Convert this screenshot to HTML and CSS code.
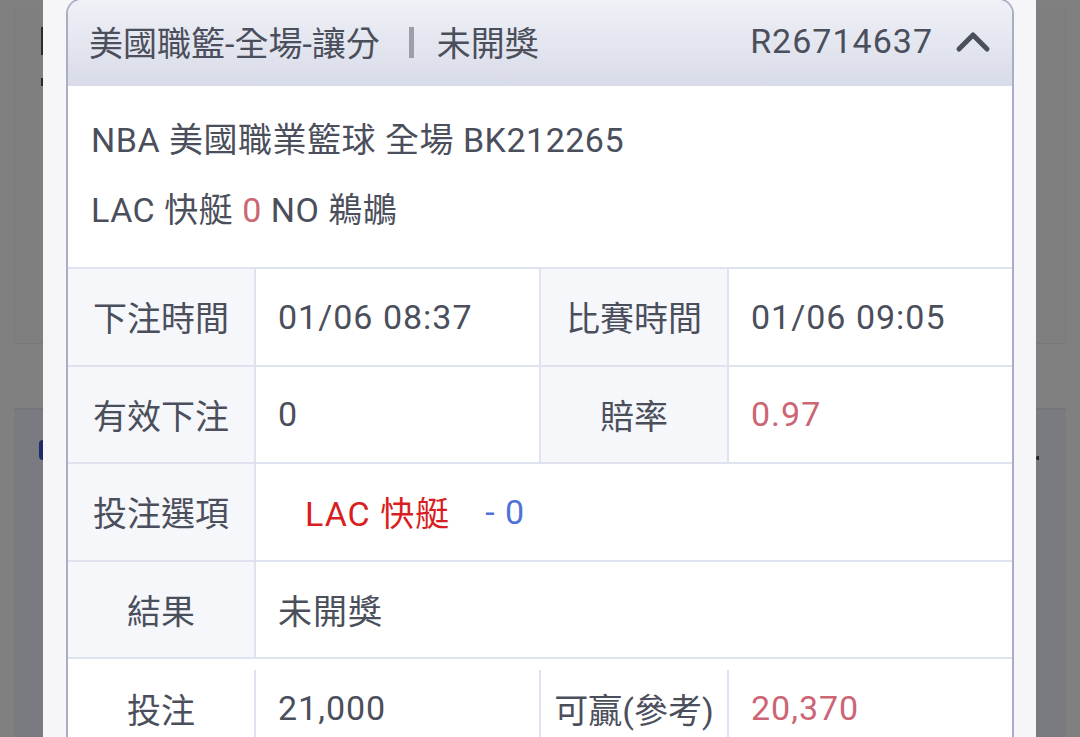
FILE: index.html
```html
<!DOCTYPE html>
<html lang="zh-Hant">
<head>
    <meta charset="UTF-8">
    <meta name="viewport" content="width=device-width, initial-scale=1.0">
    <title>注單詳情</title>
    <link rel="stylesheet" href="styles.css">
</head>
<body>
    <div class="page">
        <div class="side side-left">
            <div class="ghost-top"><span class="mark mark-a"></span><span class="mark mark-b"></span></div>
            <div class="ghost-bottom"><span class="dot"></span></div>
        </div>

        <div class="sheet">
            <div class="card">
                <div class="card-head">
                    <span class="title">美國職籃-全場-讓分</span>
                    <span class="divider"></span>
                    <span class="status">未開獎</span>
                    <span class="order-id">R26714637</span>
                    <svg class="chevron" width="36" height="24" viewBox="0 0 36 24">
                        <polyline points="4,20 18,6 32,20" fill="none" stroke="#4b4f5c" stroke-width="5" stroke-linecap="round" stroke-linejoin="round"/>
                    </svg>
                </div>

                <div class="info">
                    <p>NBA 美國職業籃球 全場 BK212265</p>
                    <p>LAC 快艇 <span class="score">0</span> NO 鵜鶘</p>
                </div>

                <div class="grid">
                    <div class="cell label">下注時間</div>
                    <div class="cell value">01/06 08:37</div>
                    <div class="cell label">比賽時間</div>
                    <div class="cell value">01/06 09:05</div>

                    <div class="cell label">有效下注</div>
                    <div class="cell value">0</div>
                    <div class="cell label">賠率</div>
                    <div class="cell value red">0.97</div>

                    <div class="cell label">投注選項</div>
                    <div class="cell value wide pick">
                        <span class="team">LAC 快艇</span>
                        <span class="handicap">- 0</span>
                    </div>

                    <div class="cell label">結果</div>
                    <div class="cell value wide">未開獎</div>
                </div>

                <div class="grid grid-foot">
                    <div class="cell label plain">投注</div>
                    <div class="cell value">21,000</div>
                    <div class="cell label plain">可贏(參考)</div>
                    <div class="cell value red">20,370</div>
                </div>
            </div>
        </div>

        <div class="side side-right">
            <div class="ghost-top"></div>
            <div class="ghost-bottom"><span class="dot dot-right"></span></div>
        </div>
    </div>
</body>
</html>
```

FILE: styles.css
```css
body {
    margin: 0;
    background-color: #808080;
    font-family: Roboto, "Noto Sans CJK TC", sans-serif;
    color: #4b4f5c;
    overflow: hidden;
}

.page {
    display: grid;
    grid-template-columns: 43px 1fr 44px;
    height: 737px;
}

/* dimmed page behind the sheet */
.side {
    display: flex;
    flex-direction: column;
}

.side-left {
    padding-left: 14px;
}

.side-right {
    padding-right: 14px;
}

.ghost-top {
    position: relative;
    height: 338px;
    margin-top: 5px;
    border-bottom: 1px solid #787878;
    border-left: 1px solid #7b7b7b;
    background-color: #7f7f7f;
}

.side-right .ghost-top {
    border-left: none;
    border-right: 1px solid #7b7b7b;
}

.ghost-bottom {
    position: relative;
    flex: 1;
    margin-top: 64px;
    border-top: 2px solid #74757a;
    background-color: #7a7b80;
}

.mark {
    position: absolute;
    right: 0;
    width: 2px;
    background-color: #2a2a30;
}

.mark-a {
    top: 22px;
    height: 28px;
}

.mark-b {
    top: 73px;
    height: 8px;
}

.dot {
    position: absolute;
    right: 0;
    top: 30px;
    width: 4px;
    height: 20px;
    border-radius: 4px 0 0 4px;
    background-color: #1f2a6b;
}

.dot-right {
    right: auto;
    left: 0;
    top: 46px;
    width: 3px;
    height: 4px;
    background-color: #222;
}

.sheet {
    background-color: #f6f6f8;
    padding: 0 22px 0 23px;
}

.card {
    margin-top: -2px;
    background: #fff;
    border: 2px solid #aaaec4;
    border-bottom: none;
    border-radius: 16px 16px 0 0;
    overflow: hidden;
    height: 760px;
}

.card-head {
    display: flex;
    align-items: center;
    height: 86px;
    box-sizing: border-box;
    padding: 0 22px 4px 21px;
    background: linear-gradient(#f0f1f7, #d8dbe8);
    font-size: 34px;
}

.divider {
    width: 5px;
    height: 31px;
    margin: 2px 23px 0 29px;
    background-color: #9c9fab;
}

.order-id {
    margin-left: auto;
    letter-spacing: 1px;
}

.chevron {
    margin-left: 22px;
    margin-right: -1px;
}

.info {
    padding: 19px 23px 22px;
    border-bottom: 2px solid #dfe2ef;
}

.info p {
    margin: 0;
    font-size: 34px;
    line-height: 70px;
    letter-spacing: 0.5px;
}

.score {
    color: #cc6574;
}

.grid {
    display: grid;
    grid-template-columns: 188px 285px 188px 1fr;
    grid-auto-rows: 97.5px;
    font-size: 34px;
}

.cell {
    display: flex;
    align-items: center;
    border-bottom: 2px solid #dfe2ef;
    border-right: 2px solid #dfe2ef;
}

.cell:nth-child(4n),
.cell.wide {
    border-right: none;
}

.label {
    justify-content: center;
    background-color: #f6f7fb;
}

.value {
    padding-left: 22px;
    letter-spacing: 1px;
}

.wide {
    grid-column: span 3;
}

.red {
    color: #cc6574;
}

.pick {
    padding-left: 49px;
    gap: 35px;
}

.team {
    color: #d81e22;
}

.handicap {
    color: #4f72d8;
}

.grid-foot {
    padding-top: 11px;
    grid-auto-rows: 76px;
}

.grid-foot .cell {
    border-bottom: none;
}

.label.plain {
    background-color: #fff;
}
```
